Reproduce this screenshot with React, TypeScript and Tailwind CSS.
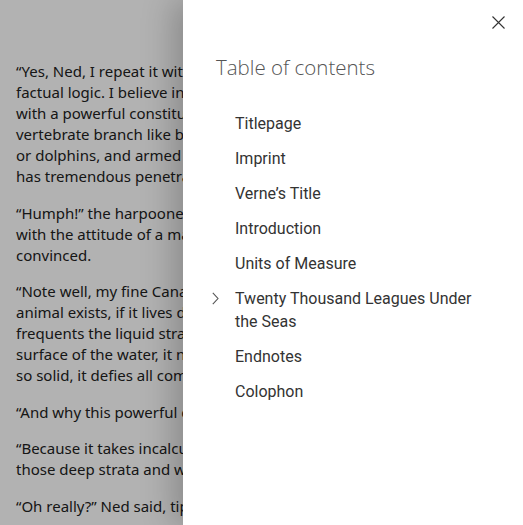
import React from 'react';

const paragraphs: string[][] = [
    [
        '“Yes, Ned, I repeat it with a conviction based on',
        'factual logic. I believe in the existence of a mammal',
        'with a powerful constitution, belonging to the',
        'vertebrate branch like baleen whales, sperm whales,',
        'or dolphins, and armed with a horn defense that',
        'has tremendous penetrating power.”',
    ],
    [
        '“Humph!” the harpooner put in, shaking his head',
        'with the attitude of a man who doesn’t want to be',
        'convinced.',
    ],
    [
        '“Note well, my fine Canadian,” I went on. “If such an',
        'animal exists, if it lives deep in the ocean, if it',
        'frequents the liquid strata located miles beneath the',
        'surface of the water, it needs to have a constitution',
        'so solid, it defies all comparison.”',
    ],
    ['“And why this powerful constitution?” Ned asked.'],
    [
        '“Because it takes incalculable strength to live in',
        'those deep strata and withstand their pressure.”',
    ],
    ['“Oh really?” Ned said, tipping me a wink.'],
];

const chapters = [
    { title: 'Titlepage' },
    { title: 'Imprint' },
    { title: 'Verne’s Title' },
    { title: 'Introduction' },
    { title: 'Units of Measure' },
    { title: 'Twenty Thousand Leagues Under the Seas', hasChildren: true },
    { title: 'Endnotes' },
    { title: 'Colophon' },
];

export default function App() {
    return (
        <div className="relative w-[523px] h-[525px] overflow-hidden bg-white">
            {/* Reader page (only the part left of the drawer is visible) */}
            <main className="w-[183px] overflow-hidden pt-[61px] pl-4 font-['Noto_Sans',sans-serif] text-[15px] leading-[21px] text-[#222]">
                {paragraphs.map((lines, i) => (
                    <p key={i} className="mb-[15.5px] whitespace-nowrap">
                        {lines.map((line, j) => (
                            <span key={j} className="block">{line}</span>
                        ))}
                    </p>
                ))}
            </main>

            {/* Dim overlay */}
            <div className="absolute inset-0 bg-black/30" />

            {/* TOC drawer */}
            <aside className="absolute top-0 right-0 bottom-0 w-[340px] bg-white shadow-[-10px_0_30px_rgba(0,0,0,0.22)]">
                <div className="flex justify-end pt-[15px] pr-[17px]">
                    <button className="w-[15px] h-[15px] flex items-center justify-center text-[#333]">
                        <svg width="13" height="13" viewBox="0 0 13 13" fill="none" stroke="currentColor" strokeWidth="1.1">
                            <path d="M0.5 0.5L12.5 12.5M12.5 0.5L0.5 12.5" />
                        </svg>
                    </button>
                </div>

                <h2 className="mt-[23px] pl-[33px] font-['Open_Sans',sans-serif] font-light text-[20.5px] leading-[28px] text-[#555]">
                    Table of contents
                </h2>

                <ul className="mt-[25px] font-['Roboto',sans-serif] text-[16px] leading-[23px] text-[#333]">
                    {chapters.map((c) => (
                        <li key={c.title} className="flex py-[6px]">
                            <span className="w-[52px] flex justify-end pr-[16px] pt-[5px]">
                                {c.hasChildren && (
                                    <svg width="7" height="13" viewBox="0 0 7 13" fill="none" stroke="#555" strokeWidth="1.1">
                                        <path d="M0.8 0.8L6 6.5L0.8 12.2" />
                                    </svg>
                                )}
                            </span>
                            <span className="w-[250px]">{c.title}</span>
                        </li>
                    ))}
                </ul>
            </aside>
        </div>
    );
}
